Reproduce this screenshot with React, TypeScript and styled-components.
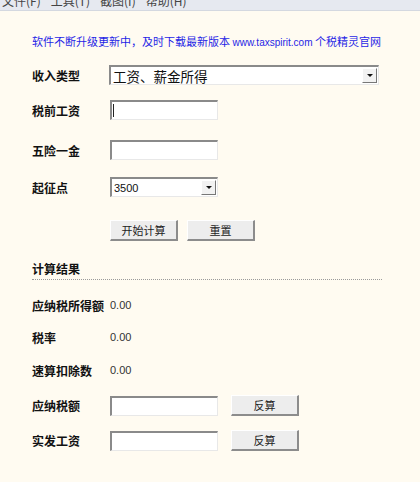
import React from "react";
import styled, { createGlobalStyle } from "styled-components";

const GlobalStyle = createGlobalStyle`
  html, body {
    margin: 0;
    padding: 0;
    background: #fffbf1;
  }
  body {
    font-family: "Liberation Sans", "Noto Sans CJK SC", sans-serif;
    color: #111;
  }
`;

const Page = styled.div`
  width: 420px;
  height: 482px;
  overflow: hidden;
  display: flex;
  flex-direction: column;
  background: #fffbf1;
`;

const MenuBar = styled.div`
  margin-top: -10px;
  height: 20px;
  display: flex;
  align-items: center;
  padding-left: 2px;
  background: #e6e9f0;
  border-bottom: 1px solid #d4d8e0;
  font-family: "Noto Sans CJK SC", sans-serif;
  font-size: 12px;
  color: #444;
`;

const MenuItem = styled.span`
  margin-right: 10px;
`;

const Content = styled.div`
  padding: 0 38px 0 32px;
  display: flex;
  flex-direction: column;
`;

const Notice = styled.div`
  margin-top: 22px;
  height: 16px;
  line-height: 16px;
  font-family: "Noto Sans CJK SC", sans-serif;
  font-size: 11px;
  color: #1f1fe6;
  white-space: nowrap;
`;

const Url = styled.span`
  font-family: "Liberation Sans", sans-serif;
  font-size: 10px;
`;

const Row = styled.div<{ $top: number; $h: number }>`
  margin-top: ${(p) => p.$top}px;
  height: ${(p) => p.$h}px;
  display: flex;
  align-items: center;
`;

const Label = styled.div`
  width: 78px;
  flex: none;
  font-family: "Noto Sans CJK SC", sans-serif;
  font-weight: 700;
  font-size: 12px;
  color: #111;
  white-space: nowrap;
`;

const Value = styled.span`
  font-size: 11px;
  color: #333;
`;

const Field = styled.div<{ $w: number; $shift?: number }>`
  box-sizing: border-box;
  width: ${(p) => p.$w}px;
  margin-left: ${(p) => p.$shift ?? 0}px;
  height: 20px;
  background: #fff;
  border-top: 2px solid #8a8a8a;
  border-left: 2px solid #8a8a8a;
  border-right: 1px solid #e8e8e8;
  border-bottom: 1px solid #e8e8e8;
  display: flex;
  align-items: center;
`;

const Caret = styled.span`
  width: 1px;
  height: 13px;
  margin-left: 1px;
  background: #222;
`;

const ComboText = styled.span<{ $size: number; $cjk?: boolean }>`
  flex: 1;
  padding-left: 2px;
  font-family: ${(p) =>
    p.$cjk ? '"Noto Sans CJK SC", sans-serif' : '"Liberation Sans", sans-serif'};
  font-size: ${(p) => p.$size}px;
  color: #111;
  white-space: nowrap;
`;

const ArrowBox = styled.span`
  box-sizing: border-box;
  width: 15px;
  height: 15px;
  margin-right: 1px;
  background: #f2f2f2;
  border-top: 1px solid #fff;
  border-left: 1px solid #fff;
  border-right: 1px solid #777;
  border-bottom: 1px solid #777;
  display: flex;
  align-items: center;
  justify-content: center;
  &::after {
    content: "";
    border-left: 3px solid transparent;
    border-right: 3px solid transparent;
    border-top: 3px solid #111;
  }
`;

const Button = styled.button<{ $left?: number }>`
  box-sizing: border-box;
  margin-left: ${(p) => p.$left ?? 0}px;
  width: 68px;
  height: 21px;
  padding: 0;
  background: #ededed;
  border-top: 1px solid #fff;
  border-left: 1px solid #fff;
  border-right: 2px solid #8c8c8c;
  border-bottom: 2px solid #8c8c8c;
  font-family: "Noto Sans CJK SC", sans-serif;
  font-size: 11px;
  color: #222;
`;

const Indent = styled.div`
  width: 78px;
  flex: none;
`;

const SectionTitle = styled.div`
  margin-top: 20px;
  height: 16px;
  line-height: 16px;
  font-family: "Noto Sans CJK SC", sans-serif;
  font-weight: 700;
  font-size: 12px;
`;

const Divider = styled.div`
  margin-top: 2px;
  height: 0;
  border-top: 1px dotted #9a9a9a;
`;

const results = [
  { label: "应纳税所得额", value: "0.00", top: 17 },
  { label: "税率", value: "0.00", top: 16 },
  { label: "速算扣除数", value: "0.00", top: 17 },
];

const reverse = [
  { label: "应纳税额", top: 17 },
  { label: "实发工资", top: 14 },
];

export default function App() {
  return (
    <Page>
      <GlobalStyle />
      <MenuBar>
        <MenuItem>文件(F)</MenuItem>
        <MenuItem>工具(T)</MenuItem>
        <MenuItem>截图(I)</MenuItem>
        <MenuItem>帮助(H)</MenuItem>
      </MenuBar>
      <Content>
        <Notice>
          软件不断升级更新中，及时下载最新版本 <Url>www.taxspirit.com</Url> 个税精灵官网
        </Notice>
        <Row $top={16} $h={20}>
          <Label>收入类型</Label>
          <Field $w={270} $shift={-1}>
            <ComboText $size={13.5} $cjk>
              工资、薪金所得
            </ComboText>
            <ArrowBox />
          </Field>
        </Row>
        <Row $top={15} $h={20}>
          <Label>税前工资</Label>
          <Field $w={108}>
            <Caret />
          </Field>
        </Row>
        <Row $top={20} $h={20}>
          <Label>五险一金</Label>
          <Field $w={108} />
        </Row>
        <Row $top={17} $h={20}>
          <Label>起征点</Label>
          <Field $w={108}>
            <ComboText $size={11}>3500</ComboText>
            <ArrowBox />
          </Field>
        </Row>
        <Row $top={22} $h={22}>
          <Indent />
          <Button>开始计算</Button>
          <Button $left={9}>重置</Button>
        </Row>
        <SectionTitle>计算结果</SectionTitle>
        <Divider />
        {results.map((r) => (
          <Row key={r.label} $top={r.top} $h={16}>
            <Label>{r.label}</Label>
            <Value>{r.value}</Value>
          </Row>
        ))}
        {reverse.map((r) => (
          <Row key={r.label} $top={r.top} $h={21}>
            <Label>{r.label}</Label>
            <Field $w={108} />
            <Button $left={13}>反算</Button>
          </Row>
        ))}
      </Content>
    </Page>
  );
}
